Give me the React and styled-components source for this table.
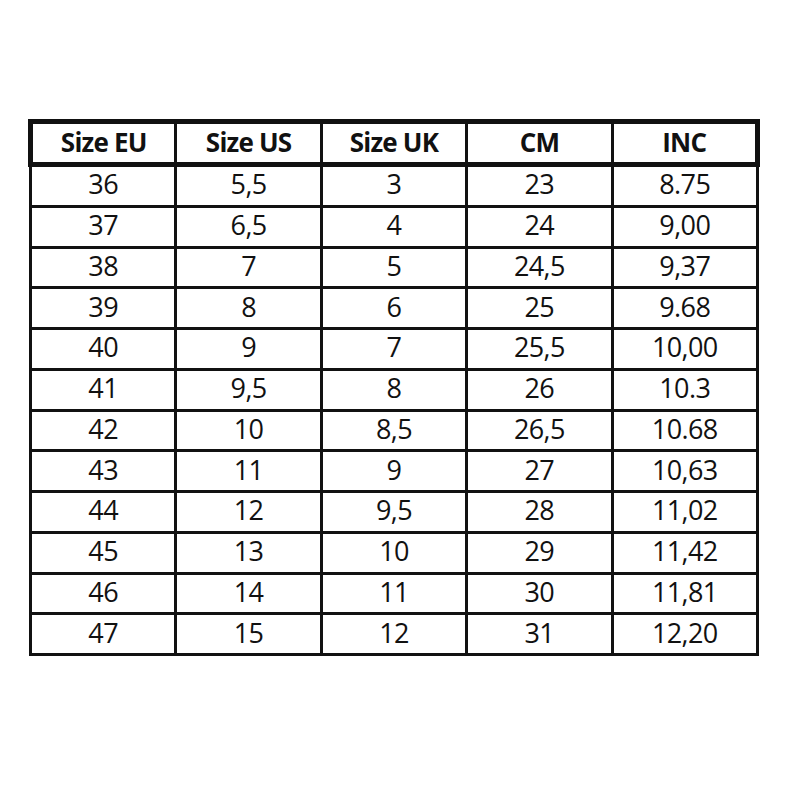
import styled, { createGlobalStyle } from 'styled-components';

const GlobalStyle = createGlobalStyle`
    html, body {
        margin: 0;
        padding: 0;
        background: #fff;
    }
    body {
        font-family: 'Open Sans', 'Liberation Sans', sans-serif;
        color: #111;
    }
`;

const rows = [
    ['36', '5,5', '3', '23', '8.75'],
    ['37', '6,5', '4', '24', '9,00'],
    ['38', '7', '5', '24,5', '9,37'],
    ['39', '8', '6', '25', '9.68'],
    ['40', '9', '7', '25,5', '10,00'],
    ['41', '9,5', '8', '26', '10.3'],
    ['42', '10', '8,5', '26,5', '10.68'],
    ['43', '11', '9', '27', '10,63'],
    ['44', '12', '9,5', '28', '11,02'],
    ['45', '13', '10', '29', '11,42'],
    ['46', '14', '11', '30', '11,81'],
    ['47', '15', '12', '31', '12,20'],
];

const headers = ['Size EU', 'Size US', 'Size UK', 'CM', 'INC'];

const Page = styled.div`
    width: 794px;
    height: 794px;
    padding: 119px 0 0 28px;
    box-sizing: border-box;
`;

const Chart = styled.table`
    border-collapse: collapse;
    table-layout: fixed;
    width: 732px;
`;

const HeadCell = styled.th`
    height: 35px;
    padding: 0 0 3px;
    border: 3px solid #111;
    border-top-width: 5px;
    border-bottom-width: 5px;
    font-size: 26px;
    font-weight: 700;
    letter-spacing: -0.8px;
    text-align: center;
    line-height: 34px;
    &:first-child {
        border-left-width: 5px;
    }
    &:last-child {
        border-right-width: 5px;
    }
`;

const Cell = styled.td`
    height: 34.75px;
    padding: 0 0 3px;
    border: 3px solid #111;
    font-size: 27px;
    font-weight: 400;
    letter-spacing: -0.6px;
    text-align: center;
    line-height: 34px;
`;

export default function App() {
    return (
        <Page>
            <GlobalStyle />
            <Chart>
                <thead>
                    <tr>
                        {headers.map((h) => (
                            <HeadCell key={h}>{h}</HeadCell>
                        ))}
                    </tr>
                </thead>
                <tbody>
                    {rows.map((r) => (
                        <tr key={r[0]}>
                            {r.map((v, i) => (
                                <Cell key={i}>{v}</Cell>
                            ))}
                        </tr>
                    ))}
                </tbody>
            </Chart>
        </Page>
    );
}
